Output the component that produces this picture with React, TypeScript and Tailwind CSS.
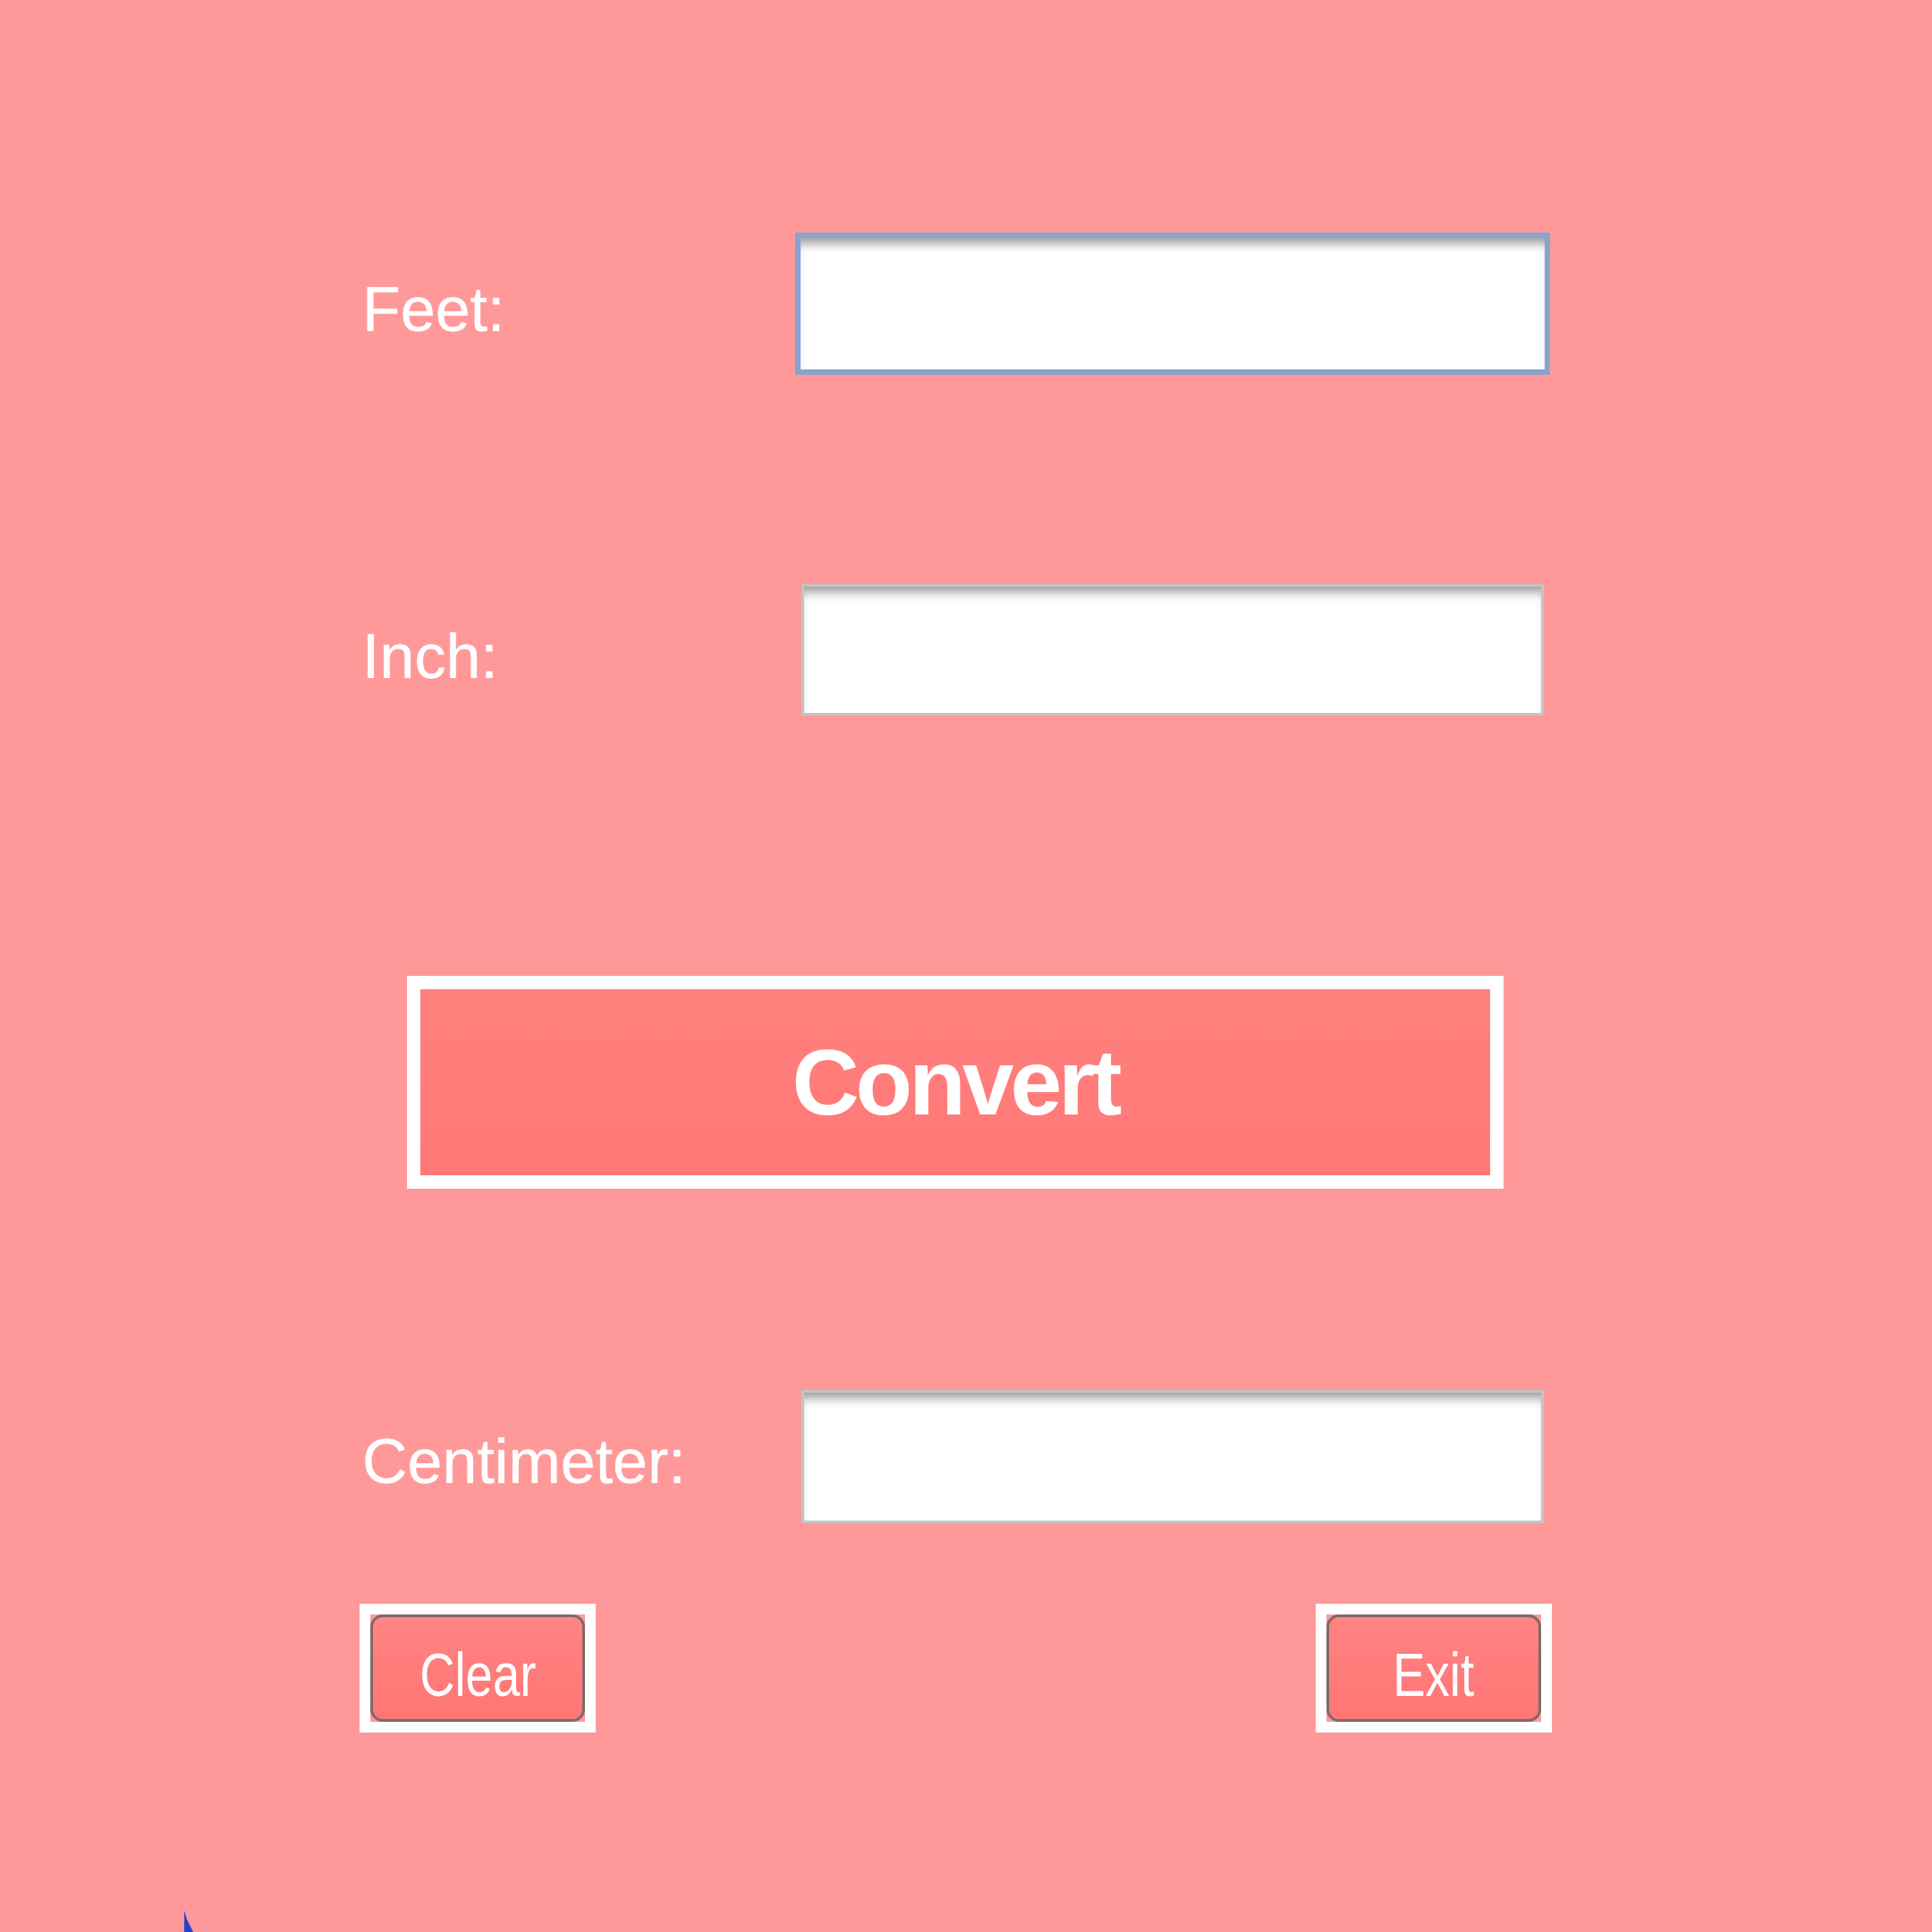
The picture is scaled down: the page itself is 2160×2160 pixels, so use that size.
export default function App() {
  return (
    <div className="relative w-[2160px] h-[2160px] bg-[#ff9999] overflow-hidden" style={{ fontFamily: '"Liberation Sans", Arial, sans-serif' }}>
      <div className="ml-[402px] w-[1333px] pt-[260px] flex flex-col">
        <div className="flex items-center h-[159px]">
          <label className="w-[487px] pl-[3px] pt-[12px] text-white text-[70px] leading-none [text-shadow:0_0_1px_#fff]">Feet:</label>
          <input
            className="w-[844px] h-[159px] bg-white border-[6px] border-[#86a4cd] outline-none shadow-[inset_0_12px_12px_-6px_rgba(0,0,0,0.4)]"
            type="text"
          />
        </div>

        <div className="flex items-center h-[147px] mt-[234px]">
          <label className="w-[494px] pl-[3px] pt-[14px] text-white text-[70px] leading-none [text-shadow:0_0_1px_#fff]">Inch:</label>
          <input
            className="w-[830px] h-[147px] bg-white border-[3px] border-[#c4c4c4] outline-none shadow-[inset_0_12px_12px_-6px_rgba(0,0,0,0.4)]"
            type="text"
          />
        </div>

        <button className="mt-[291px] ml-[53px] w-[1226px] h-[238px] border-[15px] border-white bg-gradient-to-b from-[#ff817d] to-[#ff7777] flex items-center justify-center">
          <span className="text-white text-[104px] font-bold tracking-[-4px] leading-none">Convert</span>
        </button>

        <div className="flex items-center h-[149px] mt-[225px]">
          <label className="w-[494px] pl-[3px] pt-[10px] text-white text-[70px] leading-none [text-shadow:0_0_1px_#fff]">Centimeter:</label>
          <input
            className="w-[830px] h-[149px] bg-white border-[3px] border-[#c4c4c4] outline-none shadow-[inset_0_12px_12px_-6px_rgba(0,0,0,0.4)]"
            type="text"
          />
        </div>

        <div className="flex justify-between mt-[90px]">
          <button className="w-[264px] h-[144px] border-[12px] border-white bg-[#ff9999] p-0">
            <div className="w-full h-full rounded-[14px] border-[3px] border-[#7d6a6a] bg-gradient-to-b from-[#ff8482] to-[#ff7575] flex items-center justify-center pt-[14px]">
              <span className="inline-block text-white text-[68px] leading-none scale-x-[0.8]">Clear</span>
            </div>
          </button>
          <button className="w-[264px] h-[144px] border-[12px] border-white bg-[#ff9999] p-0">
            <div className="w-full h-full rounded-[14px] border-[3px] border-[#7d6a6a] bg-gradient-to-b from-[#ff8482] to-[#ff7575] flex items-center justify-center pt-[14px]">
              <span className="inline-block text-white text-[68px] leading-none scale-x-[0.8]">Exit</span>
            </div>
          </button>
        </div>
      </div>

      <svg className="absolute left-[205px] top-[2136px]" width="12" height="24" viewBox="0 0 12 24">
        <path d="M1 0 L1 24 L11 24 L4 10 Z" fill="#2244cc" />
      </svg>
    </div>
  )
}
